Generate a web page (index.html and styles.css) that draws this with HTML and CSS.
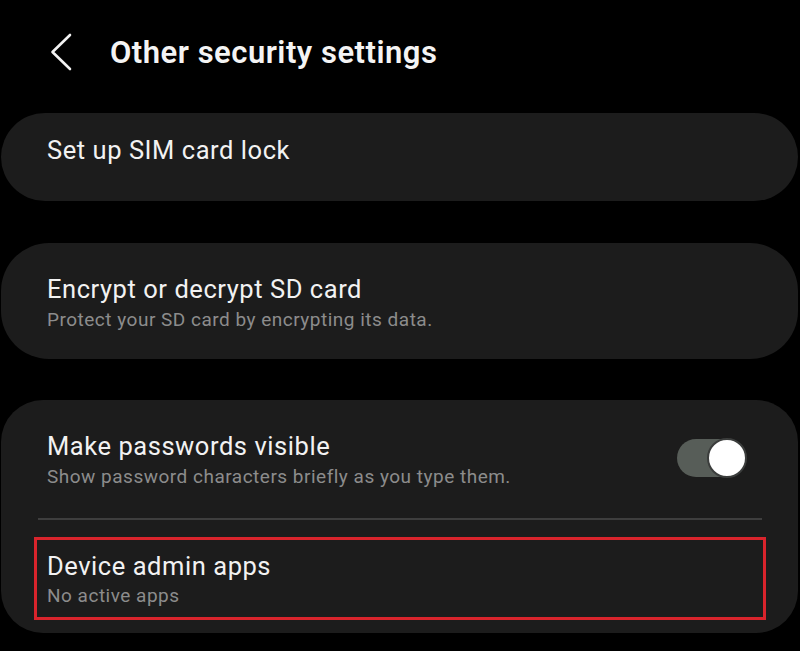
FILE: index.html
```html
<!DOCTYPE html>
<html lang="en">
<head>
<meta charset="utf-8">
<title>Other security settings</title>
<link rel="stylesheet" href="styles.css">
</head>
<body>
<div class="screen">
  <header class="header">
    <svg class="back" width="24" height="40" viewBox="0 0 24 40" aria-hidden="true">
      <path d="M21 3 L3.5 20 L21 37" fill="none" stroke="#f2f2f2" stroke-width="2.6" stroke-linecap="round" stroke-linejoin="round"/>
    </svg>
    <h1 class="title">Other security settings</h1>
  </header>

  <section class="card card-sim">
    <div class="item-title">Set up SIM card lock</div>
  </section>

  <section class="card card-sd">
    <div class="item-title">Encrypt or decrypt SD card</div>
    <div class="item-sub">Protect your SD card by encrypting its data.</div>
  </section>

  <section class="card card-group">
    <div class="row-toggle">
      <div class="row-text">
        <div class="item-title">Make passwords visible</div>
        <div class="item-sub">Show password characters briefly as you type them.</div>
      </div>
      <div class="switch">
        <div class="track"></div>
        <div class="thumb"></div>
      </div>
    </div>
    <div class="divider"></div>
    <div class="highlight">
      <div class="item-title">Device admin apps</div>
      <div class="item-sub">No active apps</div>
    </div>
  </section>
</div>
</body>
</html>
```

FILE: styles.css
```css
html, body {
  margin: 0;
  padding: 0;
  background: #000;
}

.screen {
  width: 800px;
  height: 651px;
  overflow: hidden;
  background: #000;
  font-family: Roboto, "Noto Sans", "Liberation Sans", sans-serif;
  color: #f2f2f2;
}

.header {
  height: 113px;
  box-sizing: border-box;
  padding: 32px 0 0 49px;
  display: flex;
  align-items: flex-start;
}

.back {
  display: block;
  flex: none;
}

.title {
  margin: 3px 0 0 37px;
  font-size: 31px;
  line-height: 36px;
  font-weight: 600;
  letter-spacing: 0.5px;
  color: #f4f4f4;
}

.card {
  margin-left: 1px;
  width: 797px;
  box-sizing: border-box;
  background: #1c1c1c;
}

.card-sim {
  height: 88px;
  border-radius: 44px;
  padding: 22px 0 0 46px;
}

.card-sd {
  margin-top: 42px;
  height: 116px;
  border-radius: 48px;
  padding: 31px 0 0 46px;
}

.card-group {
  margin-top: 41px;
  height: 233px;
  border-radius: 42px;
  padding-top: 31px;
}

.item-title {
  font-size: 25.5px;
  line-height: 30px;
  font-weight: 400;
  letter-spacing: 0.55px;
  color: #f2f2f2;
  white-space: nowrap;
}

.item-sub {
  margin-top: 4.5px;
  font-size: 19px;
  line-height: 22px;
  letter-spacing: 0.5px;
  color: #8c8c8c;
  white-space: nowrap;
}

.row-toggle {
  display: flex;
  align-items: center;
  justify-content: space-between;
  padding: 0 51px 0 46px;
}

.switch {
  position: relative;
  width: 70px;
  height: 40px;
  flex: none;
  margin-top: -3px;
}

.track {
  position: absolute;
  left: 0;
  top: 1px;
  width: 64px;
  height: 38px;
  border-radius: 19px;
  background: #575d58;
}

.thumb {
  position: absolute;
  right: 0;
  top: 0;
  width: 36px;
  height: 36px;
  border: 2px solid #3b3d3c;
  border-radius: 50%;
  background: #ffffff;
}

.divider {
  margin: 30px 36px 0 37px;
  height: 2px;
  background: #3e3e3e;
}

.highlight {
  margin: 17px 32px 0 33px;
  height: 83px;
  box-sizing: border-box;
  border: 3px solid #d9242c;
  padding: 11px 0 0 10px;
}
```
